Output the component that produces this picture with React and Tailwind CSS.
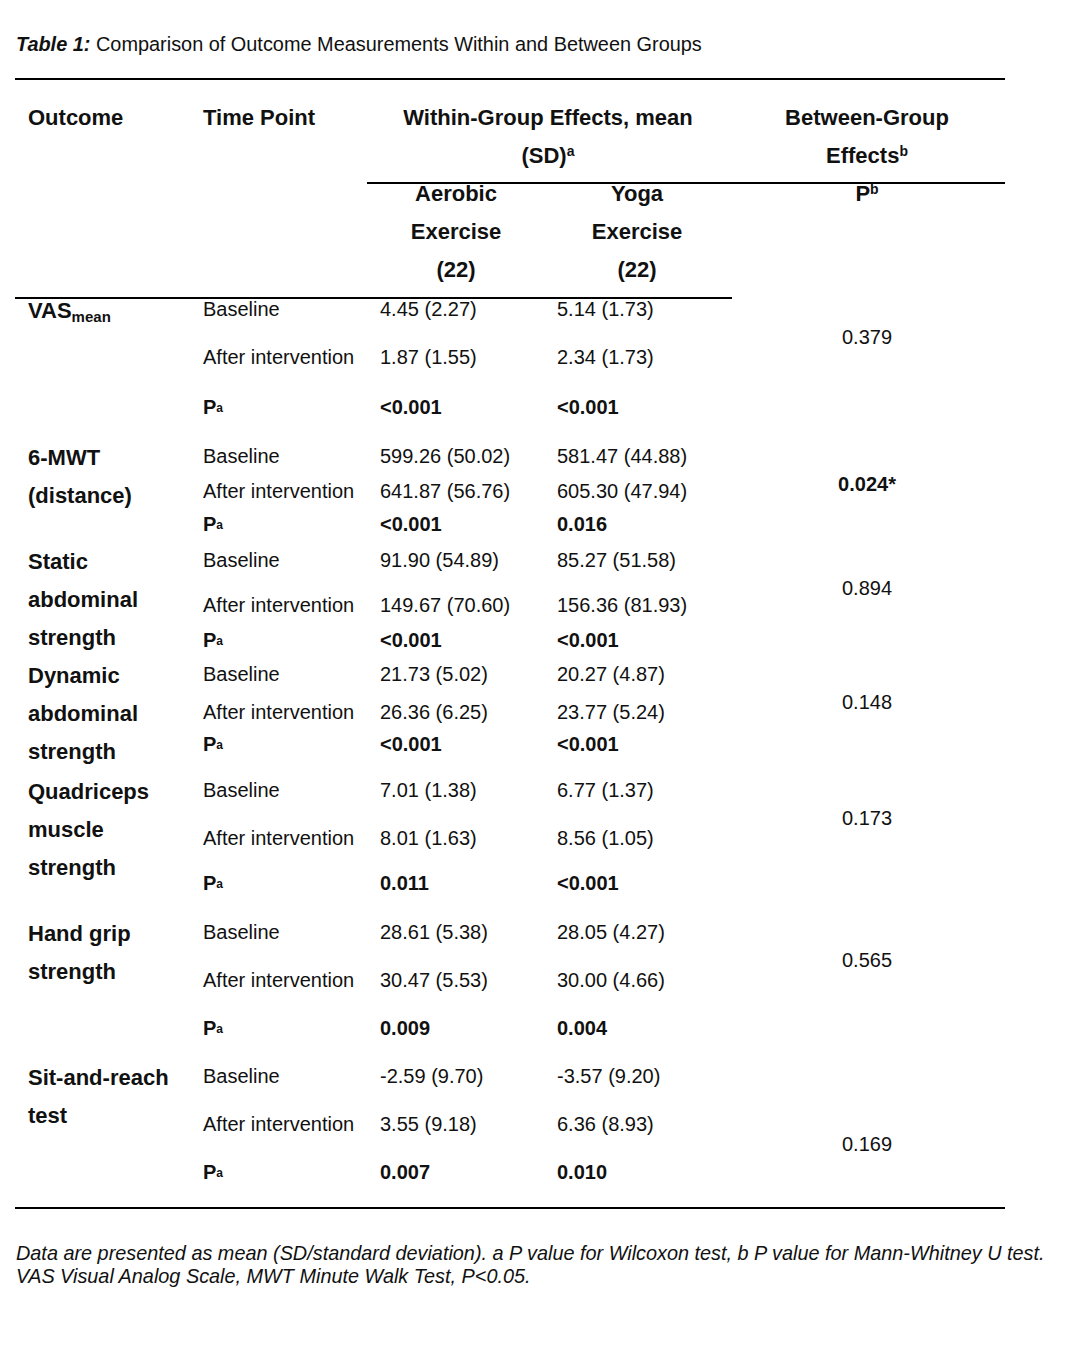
const font = { fontFamily: '"Liberation Sans", Arial, Helvetica, sans-serif' };

// heights = distance between row centres, taken from the scan
const groups = [
    {
        label: [<>VAS<span className="text-[15px] leading-[0] align-[-4px]">mean</span></>],
        rows: [
            ["Baseline", "4.45 (2.27)", "5.14 (1.73)", 48],
            ["After intervention", "1.87 (1.55)", "2.34 (1.73)", 50],
            ["P", "<0.001", "<0.001", 49],
        ],
        between: "0.379",
    },
    {
        label: ["6-MWT", "(distance)"],
        rows: [
            ["Baseline", "599.26 (50.02)", "581.47 (44.88)", 35],
            ["After intervention", "641.87 (56.76)", "605.30 (47.94)", 33],
            ["P", "<0.001", "0.016", 36],
        ],
        between: "0.024*",
        bold: true,
    },
    {
        label: ["Static", "abdominal", "strength"],
        rows: [
            ["Baseline", "91.90 (54.89)", "85.27 (51.58)", 45],
            ["After intervention", "149.67 (70.60)", "156.36 (81.93)", 35],
            ["P", "<0.001", "<0.001", 34],
        ],
        between: "0.894",
    },
    {
        label: ["Dynamic", "abdominal", "strength"],
        rows: [
            ["Baseline", "21.73 (5.02)", "20.27 (4.87)", 38],
            ["After intervention", "26.36 (6.25)", "23.77 (5.24)", 32],
            ["P", "<0.001", "<0.001", 46],
        ],
        between: "0.148",
    },
    {
        label: ["Quadriceps", "muscle", "strength"],
        rows: [
            ["Baseline", "7.01 (1.38)", "6.77 (1.37)", 48],
            ["After intervention", "8.01 (1.63)", "8.56 (1.05)", 45],
            ["P", "0.011", "<0.001", 49],
        ],
        between: "0.173",
    },
    {
        label: ["Hand grip", "strength"],
        rows: [
            ["Baseline", "28.61 (5.38)", "28.05 (4.27)", 48],
            ["After intervention", "30.47 (5.53)", "30.00 (4.66)", 48],
            ["P", "0.009", "0.004", 48],
        ],
        between: "0.565",
    },
    {
        label: ["Sit-and-reach", "test"],
        rows: [
            ["Baseline", "-2.59 (9.70)", "-3.57 (9.20)", 48],
            ["After intervention", "3.55 (9.18)", "6.36 (8.93)", 48],
            ["P", "0.007", "0.010", 45],
        ],
        between: "0.169",
        low: true,
    },
];

function Sup({ children }) {
    return <span className="text-[14px] leading-[0] align-[7px]">{children}</span>;
}

function Group({ g }) {
    return (
        <div className="flex">
            <div className="w-[188px] pl-[13px] flex flex-col gap-[14px] font-bold text-[22px] leading-[24px]">
                {g.label.map((l, i) => (
                    <div key={i} className="whitespace-nowrap">{l}</div>
                ))}
            </div>
            <div className="flex flex-col">
                {g.rows.map(([t, a, y, h], i) => {
                    const p = t === "P";
                    return (
                        <div key={i} className={`flex text-[20px] leading-[20px] ${p ? "font-bold" : ""}`} style={{ height: h }}>
                            <div className="w-[177px] whitespace-nowrap">
                                {p ? <>P<span className="text-[12px] leading-[0] align-[2px]">a</span></> : t}
                            </div>
                            <div className="w-[177px] whitespace-nowrap">{a}</div>
                            <div className="w-[172px] whitespace-nowrap">{y}</div>
                        </div>
                    );
                })}
            </div>
            <div className={`w-[276px] text-center text-[20px] leading-[20px] ${g.low ? "pt-[68px]" : "pt-[28px]"} ${g.bold ? "font-bold" : ""}`}>
                {g.between}
            </div>
        </div>
    );
}

export default function App() {
    return (
        <div className="w-[1080px] h-[1353px] bg-white text-[#111] overflow-hidden" style={font}>
            <div className="pt-[32px] pl-[16px] text-[19.9px] leading-[24px] whitespace-nowrap">
                <span className="font-bold italic">Table 1:</span> Comparison of Outcome Measurements Within and Between Groups
            </div>

            <div className="ml-[15px] mt-[22px] w-[990px]">
                {/* header */}
                <div className="flex border-t-2 border-black pt-[19px] font-bold text-[22px]">
                    <div className="w-[188px] pl-[13px] leading-[38px]">Outcome</div>
                    <div className="w-[164px] leading-[38px]">Time Point</div>
                    <div className="w-[638px] flex flex-col">
                        <div className="flex border-b-2 border-black pb-[7px] leading-[38px]">
                            <div className="w-[362px] text-center">
                                Within-Group Effects, mean
                                <br />
                                (SD)<Sup>a</Sup>
                            </div>
                            <div className="w-[276px] text-center">
                                Between-Group
                                <br />
                                Effects<Sup>b</Sup>
                            </div>
                        </div>
                        <div className="flex pb-[17px] leading-[20px]">
                            <div className="w-[178px] flex flex-col gap-[18px] items-center">
                                <div>Aerobic</div>
                                <div>Exercise</div>
                                <div>(22)</div>
                            </div>
                            <div className="w-[184px] flex flex-col gap-[18px] items-center">
                                <div>Yoga</div>
                                <div>Exercise</div>
                                <div>(22)</div>
                            </div>
                            <div className="w-[276px] text-center">
                                P<Sup>b</Sup>
                            </div>
                        </div>
                    </div>
                </div>
                <div className="w-[717px] border-t-2 border-black" />

                {/* body */}
                {groups.map((g, i) => (
                    <Group key={i} g={g} />
                ))}
                <div className="border-t-2 border-black" />
            </div>

            <div className="pl-[16px] pt-[33px] italic text-[19.85px] leading-[23px] whitespace-nowrap">
                Data are presented as mean (SD/standard deviation). a P value for Wilcoxon test, b P value for Mann-Whitney U test.
                <br />
                VAS Visual Analog Scale, MWT Minute Walk Test, P&lt;0.05.
            </div>
        </div>
    );
}
